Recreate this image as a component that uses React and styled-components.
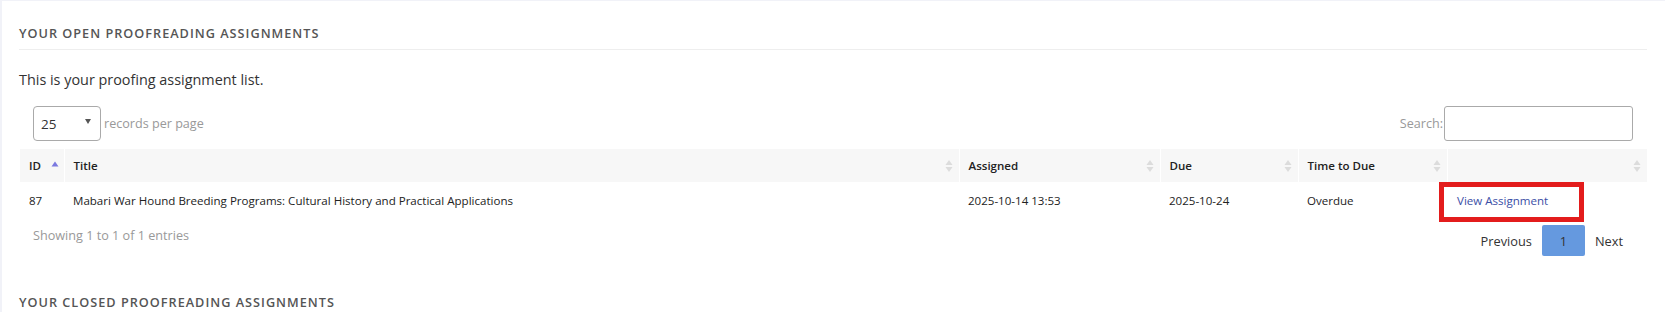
import styled, { createGlobalStyle } from "styled-components";

const GlobalStyle = createGlobalStyle`
  html, body {
    margin: 0;
    padding: 0;
    background: #f1f2f8;
    font-family: "Open Sans", "Liberation Sans", sans-serif;
  }
`;

const Card = styled.div`
  margin: 1px 0 0 2px;
  background: #fff;
  padding: 24px 18px 0 17px;
  height: 311px;
  box-sizing: border-box;
  overflow: hidden;
`;

const SectionTitle = styled.h2`
  margin: 0;
  font-size: 12.7px;
  line-height: 16px;
  font-weight: 600;
  letter-spacing: 1px;
  text-transform: uppercase;
  color: #555;
  padding-bottom: 8px;
  border-bottom: ${(p) => (p.$ruled ? "1px solid #eee" : "none")};
  margin-top: ${(p) => p.$top || 0}px;
`;

const Intro = styled.p`
  margin: 20px 0 0;
  font-size: 14.4px;
  line-height: 20px;
  color: #333;
`;

const Controls = styled.div`
  display: flex;
  justify-content: space-between;
  align-items: center;
  margin-top: 16px;
  padding: 0 14px 0 14px;
  height: 35px;
`;

const Length = styled.label`
  display: flex;
  align-items: center;
  gap: 3px;
  font-size: 12.6px;
  color: #999;
`;

const Select = styled.div`
  width: 68px;
  height: 35px;
  box-sizing: border-box;
  border: 1px solid #aaa;
  border-radius: 4px;
  display: flex;
  align-items: center;
  justify-content: space-between;
  padding: 0 9px 0 7px;
  font-size: 13.5px;
  color: #333;
`;

const Caret = styled.span`
  width: 0;
  height: 0;
  border-left: 3.5px solid transparent;
  border-right: 3.5px solid transparent;
  border-top: 5px solid #555;
  margin-top: -4px;
`;

const SearchLabel = styled.label`
  display: flex;
  align-items: center;
  font-size: 12.6px;
  color: #999;
`;

const SearchInput = styled.input`
  width: 189px;
  height: 35px;
  box-sizing: border-box;
  border: 1px solid #aaa;
  border-radius: 3px;
  margin-left: 1px;
`;

const Table = styled.table`
  margin: 8px 0 0 1px;
  width: 1627px;
  border-collapse: collapse;
  table-layout: fixed;
  font-size: 11.55px;
  color: #222;
`;

const Th = styled.th`
  position: relative;
  height: 33px;
  padding: 0 9px;
  background: #f7f7f7;
  border-left: ${(p) => (p.$first ? "none" : "1px solid #fff")};
  text-align: left;
  font-weight: 600;
  box-sizing: border-box;
`;

const SortWrap = styled.span`
  position: absolute;
  right: ${(p) => (p.$active ? 5 : 6)}px;
  top: 50%;
  transform: translateY(-50%);
  display: flex;
`;

const Td = styled.td`
  position: relative;
  height: 36px;
  padding: 0 9px;
  white-space: nowrap;
`;

const LinkText = styled.a`
  color: #3a4ea6;
  text-decoration: none;
  padding-left: 1px;
`;

const Highlight = styled.span`
  position: absolute;
  left: -8px;
  top: 0;
  width: 145px;
  height: 40px;
  box-sizing: border-box;
  border: 5px solid #e31c1c;
  pointer-events: none;
`;

const Footer = styled.div`
  display: flex;
  justify-content: space-between;
  align-items: center;
  margin-top: 7px;
  padding: 0 14px 0 14px;
  height: 31px;
`;

const Info = styled.div`
  font-size: 12.65px;
  color: #999;
  margin-top: -12px;
`;

const Pager = styled.div`
  display: flex;
  align-items: center;
  font-size: 12.8px;
  color: #333;
`;

const PageBtn = styled.span`
  padding: 0 10px;
  height: 31px;
  display: flex;
  align-items: center;
  justify-content: center;
  ${(p) =>
    p.$current &&
    `
    width: 43px;
    padding: 0;
    background: #6599df;
    border-radius: 2px;
  `}
`;

function SortIcon({ active }) {
  if (active) {
    return (
      <svg width="8" height="12" viewBox="0 0 8 12">
        <path d="M4 1.5 L7.5 6.5 L0.5 6.5 Z" fill="#7b79e0" />
      </svg>
    );
  }
  return (
    <svg width="8" height="14" viewBox="0 0 8 14">
      <path d="M4 1 L7.5 6 L0.5 6 Z" fill="#dcdcdc" />
      <path d="M4 13 L7.5 8 L0.5 8 Z" fill="#dcdcdc" />
    </svg>
  );
}

const columns = [
  { key: "id", label: "ID", width: 44, active: true },
  { key: "title", label: "Title", width: 895 },
  { key: "assigned", label: "Assigned", width: 201 },
  { key: "due", label: "Due", width: 138 },
  { key: "ttd", label: "Time to Due", width: 149 },
  { key: "action", label: "", width: 200 },
];

const rows = [
  {
    id: 87,
    title: "Mabari War Hound Breeding Programs: Cultural History and Practical Applications",
    assigned: "2025-10-14 13:53",
    due: "2025-10-24",
    ttd: "Overdue",
  },
];

export default function App() {
  return (
    <>
      <GlobalStyle />
      <Card>
        <SectionTitle $ruled>Your Open Proofreading Assignments</SectionTitle>
        <Intro>This is your proofing assignment list.</Intro>

        <Controls>
          <Length>
            <Select>
              25 <Caret />
            </Select>
            records per page
          </Length>
          <SearchLabel>
            Search:
            <SearchInput type="search" />
          </SearchLabel>
        </Controls>

        <Table>
          <colgroup>
            {columns.map((c) => (
              <col key={c.key} style={{ width: c.width }} />
            ))}
          </colgroup>
          <thead>
            <tr>
              {columns.map((c, i) => (
                <Th key={c.key} $first={i === 0}>
                  {c.label}
                  <SortWrap $active={c.active}>
                    <SortIcon active={c.active} />
                  </SortWrap>
                </Th>
              ))}
            </tr>
          </thead>
          <tbody>
            {rows.map((r) => (
              <tr key={r.id}>
                <Td>{r.id}</Td>
                <Td>{r.title}</Td>
                <Td>{r.assigned}</Td>
                <Td>{r.due}</Td>
                <Td>{r.ttd}</Td>
                <Td>
                  <Highlight />
                  <LinkText href="#">View Assignment</LinkText>
                </Td>
              </tr>
            ))}
          </tbody>
        </Table>

        <Footer>
          <Info>Showing 1 to 1 of 1 entries</Info>
          <Pager>
            <PageBtn>Previous</PageBtn>
            <PageBtn $current>1</PageBtn>
            <PageBtn>Next</PageBtn>
          </Pager>
        </Footer>

        <SectionTitle $top={38}>Your Closed Proofreading Assignments</SectionTitle>
      </Card>
    </>
  );
}
